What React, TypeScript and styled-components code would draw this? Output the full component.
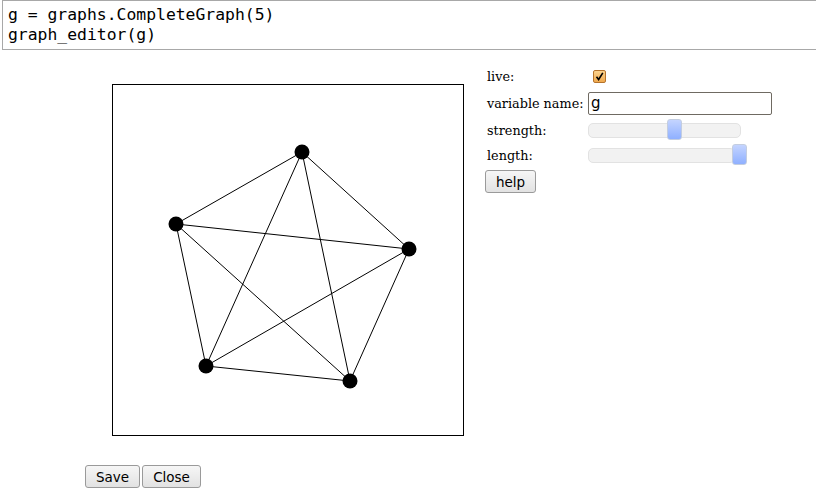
import React from "react";
import styled, { createGlobalStyle } from "styled-components";

const Global = createGlobalStyle`
  html, body { margin: 0; padding: 0; background: #fff; overflow: hidden; }
  body { width: 816px; height: 489px; }
`;

const Page = styled.div`
  display: flex;
  flex-direction: column;
  width: 816px;
  height: 489px;
  overflow: hidden;
`;

const CodeBox = styled.pre`
  margin: 0 0 0 2px;
  width: 830px;
  height: 48px;
  box-sizing: content-box;
  border: 1px solid #a8a8a8;
  padding: 0 0 0 5px;
  font-family: "DejaVu Sans Mono", monospace;
  font-size: 16.4px;
  line-height: 20px;
  color: #000;
  display: flex;
  flex-direction: column;
  justify-content: center;
`;

const Workspace = styled.div`
  display: flex;
  align-items: flex-start;
`;

const CanvasFrame = styled.div`
  margin: 34px 0 0 112px;
  width: 350px;
  height: 350px;
  border: 1px solid #000;
  flex: none;
`;

const Controls = styled.div`
  margin: 15px 0 0 21px;
  display: grid;
  grid-template-columns: 103px auto;
  align-items: center;
  font-family: "DejaVu Serif", serif;
  font-size: 12.8px;
`;

const Label = styled.div<{ $h: number }>`
  height: ${(p) => p.$h}px;
  display: flex;
  align-items: center;
  padding-left: 2px;
`;

const Cell = styled.div<{ $h: number }>`
  height: ${(p) => p.$h}px;
  display: flex;
  align-items: center;
`;

const CheckBox = styled.span`
  margin-left: 5px;
  width: 11px;
  height: 11px;
  border: 1px solid #b5732c;
  border-radius: 2px;
  background: linear-gradient(#fbd38e, #f0a94e);
  display: flex;
  align-items: center;
  justify-content: center;
`;

const TextInput = styled.div`
  width: 180px;
  height: 21px;
  border: 1px solid #6f6a62;
  border-radius: 2px;
  font-family: "DejaVu Sans", sans-serif;
  font-size: 15px;
  display: flex;
  align-items: center;
  padding-left: 2px;
  box-sizing: content-box;
`;

const Track = styled.div<{ $w: number }>`
  position: relative;
  width: ${(p) => p.$w}px;
  height: 13px;
  border: 1px solid #e2e2e2;
  border-radius: 5px;
  background: #f2f2f2;
`;

const Thumb = styled.div`
  position: absolute;
  top: -5px;
  width: 13px;
  height: 19px;
  border: 1px solid #c3cde0;
  border-radius: 3px;
  background: linear-gradient(#c4d4ff, #8fb0ff);
`;

const Button = styled.button`
  font-family: "DejaVu Sans", sans-serif;
  font-size: 13.5px;
  color: #000;
  height: 23px;
  padding: 0 10px;
  border: 1px solid #9a9a9a;
  border-radius: 3px;
  background: linear-gradient(#f6f6f6, #e2e2e2);
  line-height: 20px;
`;

const HelpRow = styled.div`
  grid-column: 1 / 3;
  padding-top: 1px;
`;

const Footer = styled.div`
  margin: 29px 0 0 85px;
  display: flex;
  gap: 2px;
`;

const nodes: [number, number][] = [
  [189, 67],
  [296, 164],
  [237, 296],
  [93, 281],
  [63, 139],
];

function Graph() {
  const edges: [number, number][] = [];
  for (let i = 0; i < nodes.length; i++)
    for (let j = i + 1; j < nodes.length; j++) edges.push([i, j]);
  return (
    <svg width="350" height="350" viewBox="0 0 350 350">
      {edges.map(([a, b], k) => (
        <line
          key={k}
          x1={nodes[a][0]}
          y1={nodes[a][1]}
          x2={nodes[b][0]}
          y2={nodes[b][1]}
          stroke="#000"
          strokeWidth={1}
        />
      ))}
      {nodes.map(([x, y], k) => (
        <circle key={k} cx={x} cy={y} r={7.5} fill="#000" />
      ))}
    </svg>
  );
}

export default function App() {
  return (
    <Page>
      <Global />
      <CodeBox>
        <span>g = graphs.CompleteGraph(5)</span>
        <span>graph_editor(g)</span>
      </CodeBox>
      <Workspace>
        <CanvasFrame>
          <Graph />
        </CanvasFrame>
        <Controls>
          <Label $h={22}>live:</Label>
          <Cell $h={22}>
            <CheckBox>
              <svg width="9" height="9" viewBox="0 0 9 9">
                <path d="M1.5 4.8 L3.6 7.5 L7.8 0.8" stroke="#000" strokeWidth="1.6" fill="none" />
              </svg>
            </CheckBox>
          </Cell>
          <Label $h={32}>variable name:</Label>
          <Cell $h={32}>
            <TextInput>g</TextInput>
          </Cell>
          <Label $h={22}>strength:</Label>
          <Cell $h={22}>
            <Track $w={151}>
              <Thumb style={{ left: "78px" }} />
            </Track>
          </Cell>
          <Label $h={28}>length:</Label>
          <Cell $h={28}>
            <Track $w={145}>
              <Thumb style={{ left: "143px" }} />
            </Track>
          </Cell>
          <HelpRow>
            <Button>help</Button>
          </HelpRow>
        </Controls>
      </Workspace>
      <Footer>
        <Button>Save</Button>
        <Button>Close</Button>
      </Footer>
    </Page>
  );
}
